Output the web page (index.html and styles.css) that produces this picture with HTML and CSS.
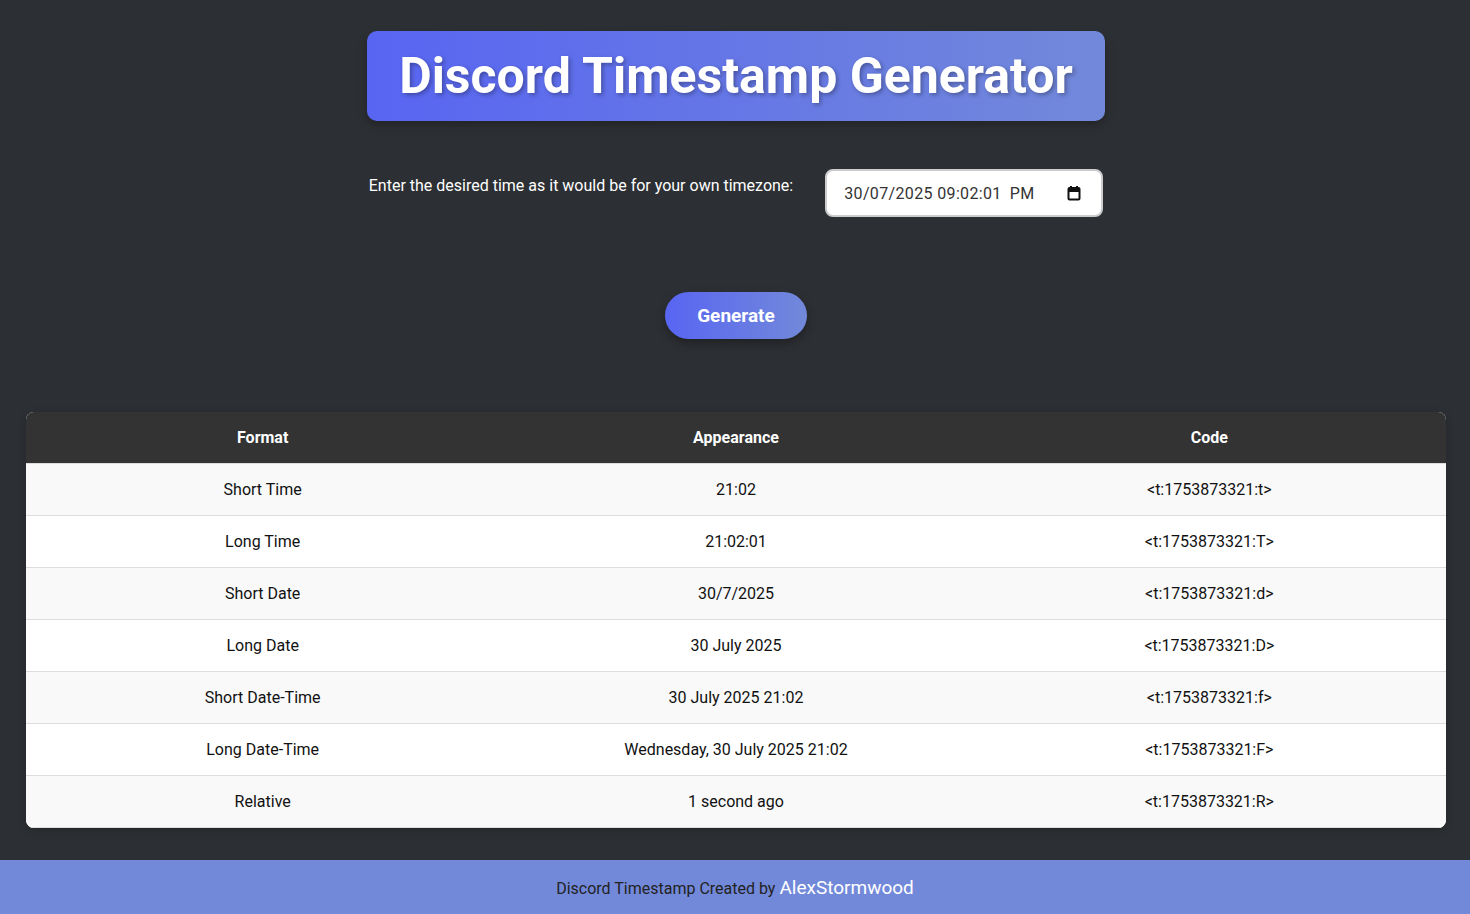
FILE: index.html
```html
<!DOCTYPE html>
<html lang="en">
<head>
<meta charset="utf-8">
<title>Discord Timestamp Generator</title>
<link rel="stylesheet" href="styles.css">
</head>
<body>
<main class="page">
  <header class="title-wrap">
    <h1 class="title">Discord Timestamp Generator</h1>
  </header>
  <section class="input-row">
    <label class="input-label">Enter the desired time as it would be for your own timezone:</label>
    <div class="date-input">
      <span class="date-value">30/07/2025 09:02:01<span class="ampm">PM</span></span>
      <svg class="cal-icon" width="14" height="16" viewBox="0 0 14 16" aria-hidden="true">
        <rect x="1.5" y="3" width="11" height="11.5" rx="1" fill="none" stroke="#111" stroke-width="2"/>
        <rect x="1.5" y="3" width="11" height="4" fill="#111"/>
        <rect x="3" y="1" width="2" height="3" fill="#111"/>
        <rect x="9" y="1" width="2" height="3" fill="#111"/>
      </svg>
    </div>
  </section>
  <div class="btn-row">
    <button class="generate-btn">Generate</button>
  </div>
  <table class="ts-table">
    <thead>
      <tr><th>Format</th><th>Appearance</th><th>Code</th></tr>
    </thead>
    <tbody>
      <tr><td>Short Time</td><td>21:02</td><td>&lt;t:1753873321:t&gt;</td></tr>
      <tr><td>Long Time</td><td>21:02:01</td><td>&lt;t:1753873321:T&gt;</td></tr>
      <tr><td>Short Date</td><td>30/7/2025</td><td>&lt;t:1753873321:d&gt;</td></tr>
      <tr><td>Long Date</td><td>30 July 2025</td><td>&lt;t:1753873321:D&gt;</td></tr>
      <tr><td>Short Date-Time</td><td>30 July 2025 21:02</td><td>&lt;t:1753873321:f&gt;</td></tr>
      <tr><td>Long Date-Time</td><td>Wednesday, 30 July 2025 21:02</td><td>&lt;t:1753873321:F&gt;</td></tr>
      <tr><td>Relative</td><td>1 second ago</td><td>&lt;t:1753873321:R&gt;</td></tr>
    </tbody>
  </table>
</main>
<footer class="footer">
  <span>Discord Timestamp Created by <a class="footer-link" href="#">AlexStormwood</a></span>
</footer>
</body>
</html>
```
FILE: styles.css
```css
* { box-sizing: border-box; }
html, body { margin: 0; padding: 0; }
body {
  background: #2c2f33;
  font-family: Roboto, "Noto Sans", "Liberation Sans", sans-serif;
  color: #fff;
}
.page {
  padding: 31px 24px 32px 26px;
  display: flex;
  flex-direction: column;
  align-items: center;
}
.title-wrap {
  width: 738px;
  height: 90px;
  border-radius: 10px;
  background: linear-gradient(90deg, #5865f2, #7289da);
  display: flex;
  align-items: center;
  justify-content: center;
  box-shadow: 0 4px 10px rgba(0,0,0,0.25);
}
.title {
  margin: 0;
  font-size: 50px;
  font-weight: 700;
  line-height: 58px;
  color: #fff;
  text-shadow: 2px 2px 4px rgba(0,0,0,0.3);
}
.input-row {
  margin-top: 48px;
  display: flex;
  align-items: flex-start;
  gap: 32px;
}
.input-label {
  font-size: 16px;
  line-height: 19px;
  padding-top: 7px;
  color: #fff;
}
.date-input {
  width: 278px;
  height: 48px;
  background: #fff;
  border: 2px solid #ccc;
  border-radius: 8px;
  display: flex;
  align-items: center;
  justify-content: space-between;
  padding: 0 20px 0 17px;
  color: #333;
  font-size: 16px;
}
.date-value { letter-spacing: 0.35px; }
.ampm { margin-left: 8px; }
.cal-icon { display: block; }
.btn-row { margin-top: 75px; }
.generate-btn {
  width: 142px;
  height: 47px;
  border: none;
  border-radius: 24px;
  background: linear-gradient(90deg, #5865f2, #7289da);
  color: #fff;
  font-family: inherit;
  font-size: 19px;
  font-weight: 700;
  box-shadow: 0 4px 10px rgba(0,0,0,0.3);
}
.ts-table {
  margin-top: 73px;
  width: 1420px;
  border-collapse: separate;
  border-spacing: 0;
  border-radius: 8px;
  overflow: hidden;
  background: #fff;
  table-layout: fixed;
  box-shadow: 0 2px 8px rgba(0,0,0,0.2);
}
.ts-table th {
  background: #333;
  color: #fff;
  font-weight: 700;
  font-size: 16px;
  height: 52px;
  text-align: center;
  padding: 0 0 1px;
  border-bottom: 1px solid #ddd;
}
.ts-table td {
  height: 52px;
  text-align: center;
  font-size: 16px;
  color: #111;
  padding: 0;
  border-bottom: 1px solid #ddd;
}
.ts-table tbody tr:nth-child(odd) td { background: #f9f9f9; }
.ts-table tbody tr:nth-child(even) td { background: #fff; }
.footer {
  background: #7289da;
  height: 54px;
  display: flex;
  align-items: center;
  justify-content: center;
  color: #222;
  font-size: 16px;
}
.footer-link {
  color: #fff;
  font-size: 19px;
  text-decoration: none;
}
```
